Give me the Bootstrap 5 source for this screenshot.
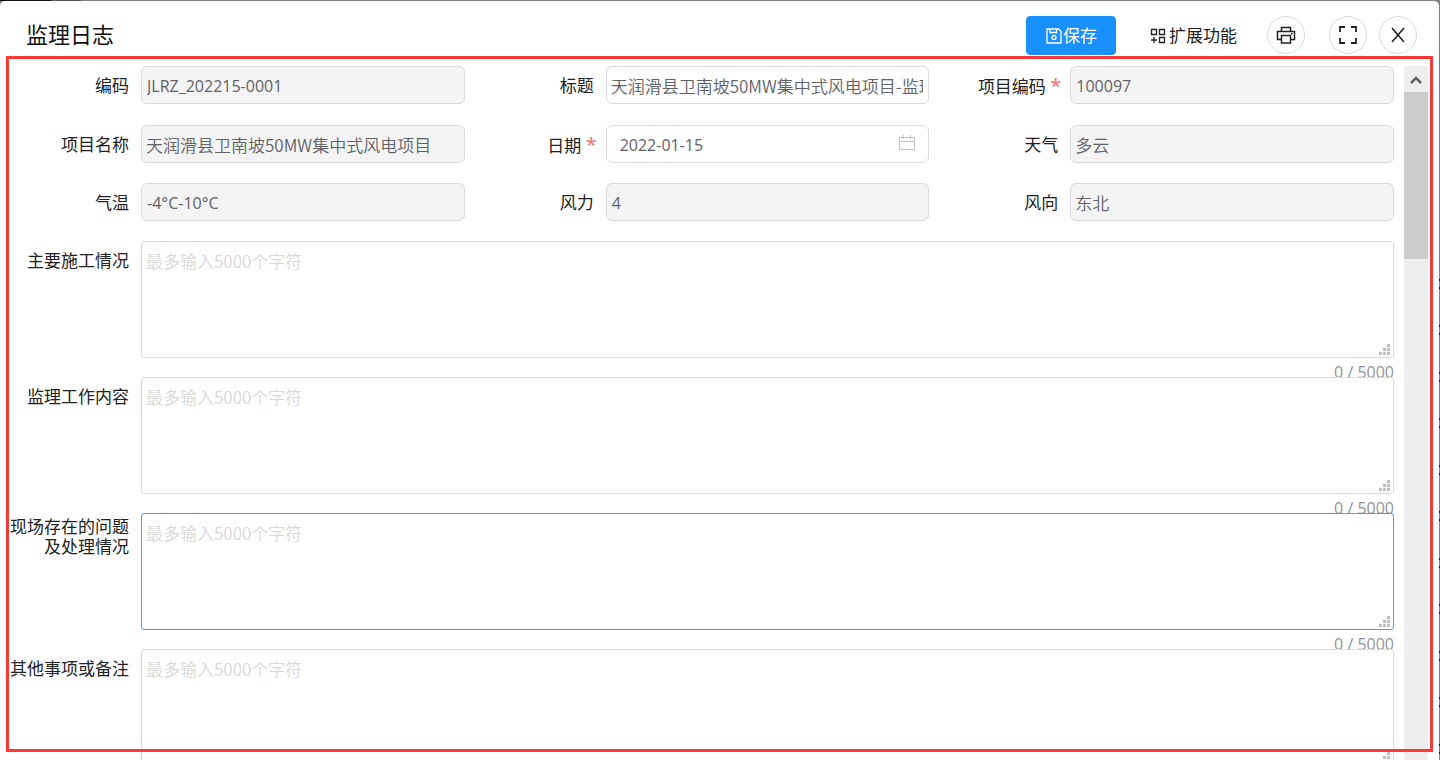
<!DOCTYPE html>
<html lang="zh-CN">
<head>
<meta charset="utf-8">
<meta name="viewport" content="width=device-width, initial-scale=1">
<title>监理日志</title>
<link href="https://cdn.jsdelivr.net/npm/bootstrap@5.3.0/dist/css/bootstrap.min.css" rel="stylesheet">
<style>
  body { background: #808080; font-family: "Open Sans", "Noto Sans CJK SC", sans-serif; font-size: 17px; line-height: 20px; color: #222; }
  .backdrop {
    background:
      linear-gradient(90deg, #111 0 51px, #555 51px 81px, transparent 81px) no-repeat 0 0 / 100% 1px,
      repeating-linear-gradient(#111 0 2px, transparent 2px 8px, #111 8px 10px, transparent 10px 46px, #111 46px 48px, transparent 48px 54px, #111 54px 56px, transparent 56px 93px) no-repeat 100% 279px / 1px 100%;
    padding: 1px 1px 0 0;
  }
  .dialog { border-radius: 5px 5px 0 0; }
  .dialog-head { height: 65px; padding: 3px 22px 0 26px; }
  .dialog-title { font-size: 22px; line-height: 28px; padding-bottom: 2px; color: #111; }
  .btn-save { --bs-btn-bg: #1890ff; --bs-btn-border-color: #1890ff; --bs-btn-color: #fff; width: 90px; height: 39px; padding: 2px 0 0; font-size: 17px; border-radius: 4px; }
  .btn-more { padding: 2px 0 0; margin: 0 30px 0 34px; font-size: 17px; color: #222; gap: 3px; }
  .btn-round { width: 38px; height: 38px; padding: 0; border: 1px solid #d9d9d9; border-radius: 50%; color: #222; }
  .btn-close-dialog { margin-left: 12px; }
  .form-side { width: 45px; padding-right: 11px; }
  .field-label { width: 141px; padding: 2px 12px 0 0; text-align: right; flex: none; }
  .label-star { padding-right: 9px; }
  .star { color: #f56c6c; font-size: 20px; }
  .field-row { margin-bottom: 20px; }
  .field-row-first { margin-bottom: 21px; }
  .box { height: 38px; padding: 0 5px 0 4px; font-family: "Noto Sans CJK SC", sans-serif; font-weight: 350; font-size: 17px; color: #606266; border: 1px solid #d9d9d9; border-radius: 6px; }
  .box[readonly] { background: #f4f4f4; }
  .box-num { padding: 2px 5px 0; font-family: "Open Sans", "Noto Sans CJK SC", sans-serif; font-weight: 400; font-size: 16px; }
  .box-date { padding-left: 13px; }
  .date-icon { right: 14px; top: 10px; }
  .area-row { margin-bottom: 19px; }
  .area-row .field-label { padding-top: 10px; }
  .area-row .label-tall { padding-top: 4px; }
  .area-box { display: block; height: 117px; padding: 9px 4px; font-family: "Noto Sans CJK SC", sans-serif; font-weight: 350; font-size: 17px; line-height: 20px; border: 1px solid #d9d9d9; border-radius: 3px; resize: none; }
  .area-box::placeholder { color: #d8d8d8; }
  .area-active { border-color: #409eff; }
  .grip { right: 4px; bottom: 3px; }
  .counter { right: 0; top: 121px; font-size: 16px; line-height: 20px; color: #909399; }
  .track { width: 24px; background: #eee; }
  .track-btn { height: 26px; padding-top: 2px; }
  .thumb { height: 167px; background: #cbcbcb; }
  .marker { inset: 56px 7px 8px 6px; border: 3px solid #ff3838; pointer-events: none; z-index: 5; }
</style>
</head>
<body>
<div class="backdrop vh-100 overflow-hidden position-relative">
  <main class="dialog bg-white h-100 d-flex flex-column overflow-hidden">
    <header class="dialog-head d-flex align-items-center flex-shrink-0">
      <h1 class="dialog-title mb-0 me-auto fw-normal">监理日志</h1>
      <button type="button" class="btn btn-save d-flex align-items-center justify-content-center">
        <svg width="18" height="18" viewBox="0 0 18 18" fill="none" stroke="currentColor" stroke-width="1.3"><path d="M2 2h11.500l2.500 2.500V16H2zM5 2v3.500h6.500V2"/><circle cx="9" cy="10.500" r="2"/></svg>保存</button>
      <button type="button" class="btn btn-more border-0 d-flex align-items-center">
        <svg width="16" height="16" viewBox="0 0 16 16" fill="none" stroke="currentColor" stroke-width="1.300"><path d="M1.500 1.500h5v5h-5zM9.500 1.500h5v5h-5zM9.500 9.500h5v5h-5zM4 9v6M1 12h6"/></svg>扩展功能</button>
      <button type="button" class="btn btn-round d-flex align-items-center justify-content-center" aria-label="打印">
        <svg width="20" height="20" viewBox="0 0 20 20" fill="none" stroke="currentColor" stroke-width="1.500"><path d="M5.500 6.500v-4h9v4M5.500 14.500h-4v-8h17v8h-4M5.500 10.500h9v7.500h-9zM15 8.800h1.500"/></svg></button>
      <button type="button" class="btn btn-round d-flex align-items-center justify-content-center ms-4" aria-label="全屏">
        <svg width="20" height="20" viewBox="0 0 20 20" fill="none" stroke="currentColor" stroke-width="1.800"><path d="M2 7V2h5M13 2h5v5M18 13v5h-5M7 18H2v-5"/></svg></button>
      <button type="button" class="btn btn-round btn-close-dialog d-flex align-items-center justify-content-center" aria-label="关闭">
        <svg width="16" height="16" viewBox="0 0 16 16" fill="none" stroke="currentColor" stroke-width="1.600"><path d="M2 1l12 14M14 1L2 15"/></svg></button>
    </header>

    <div class="d-flex flex-grow-1 overflow-hidden">
      <form class="flex-grow-1 overflow-hidden">
        <div class="row g-0 field-row-first">
          <div class="col-4 d-flex align-items-center"><label class="field-label" for="code">编码</label><input id="code" class="form-control box box-num" value="JLRZ_202215-0001" readonly></div>
          <div class="col-4 d-flex align-items-center"><label class="field-label" for="title">标题</label><input id="title" class="form-control box" value="天润滑县卫南坡50MW集中式风电项目-监理日志"></div>
          <div class="col-4 d-flex align-items-center"><label class="field-label label-star" for="pcode">项目编码 <span class="star">*</span></label><input id="pcode" class="form-control box box-num" value="100097" readonly></div>
        </div>
        <div class="row g-0 field-row">
          <div class="col-4 d-flex align-items-center"><label class="field-label" for="pname">项目名称</label><input id="pname" class="form-control box" value="天润滑县卫南坡50MW集中式风电项目" readonly></div>
          <div class="col-4 d-flex align-items-center"><label class="field-label label-star" for="date">日期 <span class="star">*</span></label>
            <div class="position-relative flex-grow-1"><input id="date" class="form-control box box-num box-date" value="2022-01-15">
              <svg class="date-icon position-absolute" width="16" height="16" viewBox="0 0 16 16" fill="none" stroke="#c0c0c0"><path d="M.5 2.500h15v12H.5zM.5 6.500h15M4.500 0v4M11.500 0v4"/></svg></div></div>
          <div class="col-4 d-flex align-items-center"><label class="field-label" for="weather">天气</label><input id="weather" class="form-control box" value="多云" readonly></div>
        </div>
        <div class="row g-0 field-row">
          <div class="col-4 d-flex align-items-center"><label class="field-label" for="temp">气温</label><input id="temp" class="form-control box box-num" value="-4°C-10°C" readonly></div>
          <div class="col-4 d-flex align-items-center"><label class="field-label" for="force">风力</label><input id="force" class="form-control box box-num" value="4" readonly></div>
          <div class="col-4 d-flex align-items-center"><label class="field-label" for="wind">风向</label><input id="wind" class="form-control box" value="东北" readonly></div>
        </div>
        <div class="d-flex area-row"><label class="field-label" for="a1">主要施工情况</label>
          <div class="position-relative flex-grow-1"><textarea id="a1" class="form-control area-box" placeholder="最多输入5000个字符"></textarea><svg class="grip position-absolute" width="11" height="11" fill="#c0c0c0"><use href="#dots"/></svg><span class="counter position-absolute">0 / 5000</span></div></div>
        <div class="d-flex area-row"><label class="field-label" for="a2">监理工作内容</label>
          <div class="position-relative flex-grow-1"><textarea id="a2" class="form-control area-box" placeholder="最多输入5000个字符"></textarea><svg class="grip position-absolute" width="11" height="11" fill="#c0c0c0"><use href="#dots"/></svg><span class="counter position-absolute">0 / 5000</span></div></div>
        <div class="d-flex area-row"><label class="field-label label-tall" for="a3">现场存在的问题及处理情况</label>
          <div class="position-relative flex-grow-1"><textarea id="a3" class="form-control area-box area-active" placeholder="最多输入5000个字符"></textarea><svg class="grip position-absolute" width="11" height="11" fill="#c0c0c0"><use href="#dots"/></svg><span class="counter position-absolute">0 / 5000</span></div></div>
        <div class="d-flex area-row"><label class="field-label" for="a4">其他事项或备注</label>
          <div class="position-relative flex-grow-1"><textarea id="a4" class="form-control area-box" placeholder="最多输入5000个字符"></textarea><svg class="grip position-absolute" width="11" height="11" fill="#c0c0c0"><use href="#dots"/></svg></div></div>
      </form>
      <div class="form-side d-flex justify-content-end flex-shrink-0">
        <div class="track">
          <div class="track-btn d-flex align-items-center justify-content-center"><svg width="12" height="10" fill="none" stroke="#606060" stroke-width="2.600"><path d="M1 8l5-5 5 5"/></svg></div>
          <div class="thumb"></div>
        </div>
      </div>
    </div>
  </main>
  <div class="marker position-absolute"></div>
</div>
<svg class="position-absolute" width="0" height="0"><defs><path id="dots" d="M8 0h3v3H8zM4 4h3v3H4zM8 4h3v3H8zM0 8h3v3H0zM4 8h3v3H4zM8 8h3v3H8z"/></defs></svg>
<script src="https://cdn.jsdelivr.net/npm/bootstrap@5.3.0/dist/js/bootstrap.bundle.min.js"></script>
</body>
</html>
